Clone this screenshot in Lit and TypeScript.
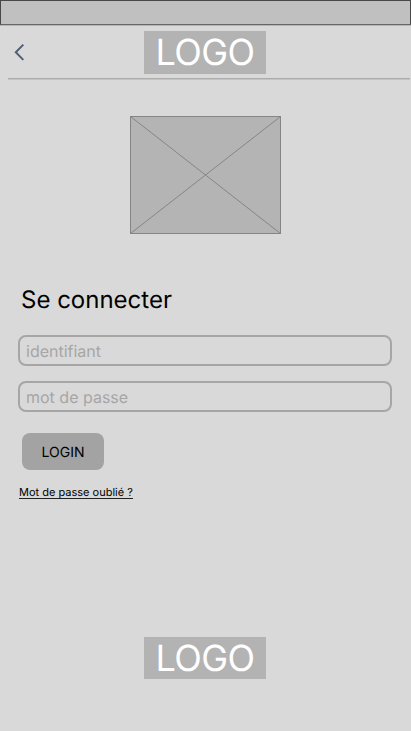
import { LitElement, html, css } from "lit";
import { customElement, property } from "lit/decorators.js";

@customElement("logo-block")
class LogoBlock extends LitElement {
  static styles = css`
    :host {
      display: block;
      box-sizing: border-box;
      width: 122px;
      height: 42.4px;
      background: #b3b3b3;
      color: #fff;
      font: 400 36px/43px Inter, sans-serif;
      letter-spacing: -0.6px;
      text-align: center;
      white-space: nowrap;
      text-rendering: geometricPrecision;
    }
  `;
  render() {
    return html`LOGO`;
  }
}

@customElement("text-field")
class TextField extends LitElement {
  @property() label = "";
  @property() type = "text";

  static styles = css`
    :host {
      display: block;
      height: 31px;
    }
    .field {
      display: block;
      box-sizing: border-box;
      width: 100%;
      height: 100%;
      margin: 0;
      padding: 1px 6px 0;
      border: 2px solid #a6a6a6;
      border-radius: 8px;
      outline: none;
      background: transparent;
      color: #000;
      font: 400 16px/20px Inter, sans-serif;
      text-rendering: geometricPrecision;
    }
    .field::placeholder {
      color: #a6a6a6;
      opacity: 1;
    }
  `;
  render() {
    return html`<input class="field" type=${this.type} placeholder=${this.label} aria-label=${this.label} />`;
  }
}

@customElement("app-root")
class AppRoot extends LitElement {
  static styles = css`
    :host {
      display: flex;
      flex-direction: column;
      box-sizing: border-box;
      height: 731px;
      overflow: hidden;
      background: #d9d9d9;
      color: #000;
      font-family: Inter, sans-serif;
      text-rendering: geometricPrecision;
    }
    .status {
      flex: none;
      box-sizing: border-box;
      height: 25px;
      border: 1px solid #484848;
      border-bottom-color: #666;
      background: #c0c0c0;
      box-shadow: 0 1px 0 #b5b5b5;
    }
    .header {
      flex: none;
      display: grid;
      grid-template-columns: 144px auto 1fr;
      align-items: start;
      box-sizing: border-box;
      height: 53px;
      padding-top: 6.4px;
    }
    .back {
      width: 14px;
      height: 20px;
      margin: 10.6px 0 0 12px;
      padding: 0;
      border: 0;
      background: none;
    }
    .back svg,
    .picture {
      display: block;
    }
    .rule {
      flex: none;
      height: 1px;
      margin: 0 1px 0 8px;
      background: #acacac;
      box-shadow: 0 1px 0 #c3c3c3;
    }
    .picture {
      flex: none;
      align-self: center;
      margin-top: 37px;
    }
    .form {
      display: flex;
      flex-direction: column;
      align-items: flex-start;
      padding: 0 19px 0 18px;
      margin-top: 51px;
    }
    .title {
      margin: 0 0 0 3px;
      font-size: 24px;
      font-weight: 400;
      line-height: 30px;
    }
    .fields {
      align-self: stretch;
      display: grid;
      gap: 15px;
      margin-top: 20px;
    }
    .login {
      width: 82px;
      height: 37px;
      margin: 21px 0 0 4px;
      padding: 2px 0 0;
      border: 0;
      border-radius: 8px;
      background: #a3a3a3;
      color: #000;
      font: 400 14px/18px Inter, sans-serif;
      text-rendering: geometricPrecision;
    }
    .forgot {
      margin: 16px 0 0 1px;
      border-bottom: 1px solid #222;
      color: #000;
      font-size: 11px;
      line-height: 12px;
      text-decoration: none;
    }
    .footer {
      display: flex;
      margin-top: auto;
      padding: 0 0 51.6px 144px;
    }
  `;

  render() {
    return html`
      <div class="status"></div>
      <header class="header">
        <button class="back" aria-label="Retour">
          <svg width="14" height="20" viewBox="0 0 14 20">
            <path d="M11.3 2.6 L3.8 10.2 L11.3 17.9" fill="none" stroke="#525f73" stroke-width="2" />
          </svg>
        </button>
        <logo-block></logo-block>
      </header>
      <div class="rule"></div>
      <svg class="picture" width="151" height="118" viewBox="0 0 151 118">
        <rect x="0.5" y="0.5" width="150" height="117" fill="#b4b4b4" stroke="#858585" />
        <path d="M0.5 0.5 L150.5 117.5 M150.5 0.5 L0.5 117.5" fill="none" stroke="#858585" />
      </svg>
      <main class="form">
        <h1 class="title">Se connecter</h1>
        <div class="fields">
          <text-field label="identifiant"></text-field>
          <text-field label="mot de passe" type="password"></text-field>
        </div>
        <button class="login">LOGIN</button>
        <a class="forgot" href="#">Mot de passe oublié ?</a>
      </main>
      <footer class="footer"><logo-block></logo-block></footer>
    `;
  }
}
